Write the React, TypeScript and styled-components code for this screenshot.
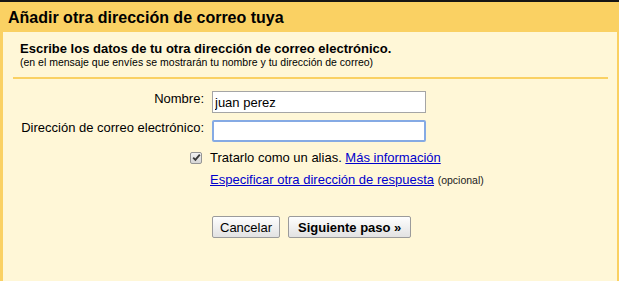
import React from "react";
import styled, { createGlobalStyle } from "styled-components";

const GlobalStyle = createGlobalStyle`
  html, body { margin: 0; padding: 0; height: 100%; }
  body {
    font-family: "Liberation Sans", Arial, sans-serif;
    color: #000;
    background: #fad163;
  }
  #root { height: 100%; }
`;

const Frame = styled.div`
  box-sizing: border-box;
  min-height: 100vh;
  display: flex;
  flex-direction: column;
  background: #fad163;
  border-top: 2px solid #151515;
  overflow: hidden;
`;

const Title = styled.h1`
  margin: 0;
  padding: 7px 8px 5px;
  font-size: 16px;
  line-height: 18px;
  font-weight: bold;
`;

const Panel = styled.div`
  flex: 1;
  margin: 0 2px 0 3px;
  padding-top: 9px;
  background: #fff7d7;
`;

const Intro = styled.div`
  padding: 0 17px;
`;

const Heading = styled.div`
  font-size: 13px;
  line-height: 15px;
  font-weight: bold;
`;

const Note = styled.div`
  font-size: 10.5px;
  line-height: 12px;
`;

const Divider = styled.div`
  height: 2px;
  margin: 9px 9px 0 10px;
  background: #fad163;
`;

const Form = styled.div`
  padding: 0 17px;
`;

const Row = styled.div<{ $top: number }>`
  display: grid;
  grid-template-columns: 184px 1fr;
  column-gap: 8px;
  align-items: start;
  margin-top: ${(p) => p.$top}px;
`;

const Label = styled.label`
  text-align: right;
  font-size: 13px;
  line-height: 15px;
  white-space: nowrap;
`;

const TextInput = styled.input<{ $focused?: boolean }>`
  box-sizing: border-box;
  width: 214px;
  height: 22px;
  margin: 0;
  padding: 0 2px;
  font-family: "Liberation Sans", Arial, sans-serif;
  font-size: 13px;
  color: #000;
  background: #fff;
  border: ${(p) => (p.$focused ? "2px solid #85aae4" : "1px solid #a5a5a5")};
  border-radius: ${(p) => (p.$focused ? "2px" : "0")};
  outline: none;
`;

const CheckCell = styled.div`
  display: flex;
  justify-content: flex-end;
  align-items: center;
  height: 15px;
  padding-right: 2px;
`;

const CheckBox = styled.span`
  box-sizing: border-box;
  display: inline-flex;
  align-items: center;
  justify-content: center;
  width: 12px;
  height: 12px;
  border: 1px solid #959595;
  border-radius: 2px;
  background: linear-gradient(#f2f2f2, #d6d6d6);
`;

const Line = styled.div`
  margin-left: -2px;
  font-size: 13px;
  line-height: 15px;
  white-space: nowrap;
`;

const Link = styled.a`
  color: #0000cc;
  text-decoration: underline;
  cursor: pointer;
`;

const Small = styled.span`
  font-size: 10.5px;
  color: #222;
`;

const Buttons = styled.div`
  display: flex;
  gap: 8px;
`;

const Button = styled.button<{ $primary?: boolean }>`
  box-sizing: border-box;
  height: 22px;
  margin: 0;
  padding: 0 ${(p) => (p.$primary ? 9 : 7)}px;
  font-family: "Liberation Sans", Arial, sans-serif;
  font-size: 13px;
  font-weight: ${(p) => (p.$primary ? "bold" : "normal")};
  color: #000;
  background: linear-gradient(#fefefe, #e2e2e2);
  border: 1px solid #9b9b9b;
  border-radius: 2px;
  cursor: pointer;
`;

export default function App() {
  return (
    <>
      <GlobalStyle />
      <Frame>
        <Title>Añadir otra dirección de correo tuya</Title>
        <Panel>
          <Intro>
            <Heading>Escribe los datos de tu otra dirección de correo electrónico.</Heading>
            <Note>(en el mensaje que envíes se mostrarán tu nombre y tu dirección de correo)</Note>
          </Intro>
          <Divider />
          <Form>
            <Row $top={12}>
              <Label htmlFor="nombre">Nombre:</Label>
              <TextInput id="nombre" defaultValue="juan perez" />
            </Row>
            <Row $top={7}>
              <Label htmlFor="correo">Dirección de correo electrónico:</Label>
              <TextInput id="correo" $focused />
            </Row>
            <Row $top={8}>
              <CheckCell>
                <CheckBox>
                  <svg width="9" height="9" viewBox="0 0 9 9">
                    <path d="M1.2 4.6 L3.4 6.8 L7.8 1.6" fill="none" stroke="#3a3a3a" strokeWidth="1.9" />
                  </svg>
                </CheckBox>
              </CheckCell>
              <Line>
                Tratarlo como un alias. <Link>Más información</Link>
              </Line>
            </Row>
            <Row $top={7}>
              <span />
              <Line>
                <Link>Especificar otra dirección de respuesta</Link> <Small>(opcional)</Small>
              </Line>
            </Row>
            <Row $top={28}>
              <span />
              <Buttons>
                <Button>Cancelar</Button>
                <Button $primary>Siguiente paso »</Button>
              </Buttons>
            </Row>
          </Form>
        </Panel>
      </Frame>
    </>
  );
}
